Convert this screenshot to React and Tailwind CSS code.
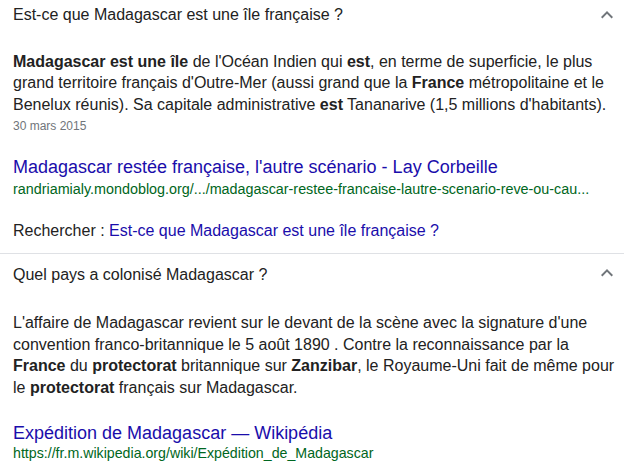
import React from "react";

function Chevron() {
  return (
    <svg width="24" height="24" viewBox="0 0 24 24" className="shrink-0" fill="#70757a">
      <path d="M12 8l-6 6 1.41 1.41L12 10.83l4.59 4.58L18 14z" />
    </svg>
  );
}

export default function App() {
  return (
    <div
      className="w-[624px] h-[476px] overflow-hidden bg-white text-[#222]"
      style={{ fontFamily: '"Liberation Sans", Arial, sans-serif' }}
    >
      {/* Section 1 */}
      <div className="pl-[13px] pr-[5px]">
        <div className="flex items-center justify-between pt-[2.5px]">
          <div className="text-[16px] leading-[22px]">Est-ce que Madagascar est une île française ?</div>
          <Chevron />
        </div>
      </div>
      <div className="pl-[13px] pr-[5px]">
        <div className="mt-[24px] text-[16px] leading-[21.7px] whitespace-nowrap">
          <b>Madagascar est une île</b> de l'Océan Indien qui <b>est</b>, en terme de superficie, le plus
          <br />
          grand territoire français d'Outre-Mer (aussi grand que la <b>France</b> métropolitaine et le
          <br />
          Benelux réunis). Sa capitale administrative <b>est</b> Tananarive (1,5 millions d'habitants).
        </div>
        <div className="mt-[2px] text-[12px] leading-[16px] text-[#70757a]">30 mars 2015</div>
        <div className="mt-[21px] text-[18px] leading-[24px] text-[#1a0dab]">
          Madagascar restée française, l'autre scénario - Lay Corbeille
        </div>
        <div className="text-[14.35px] leading-[20px] text-[#006621] whitespace-nowrap">
          randriamialy.mondoblog.org/.../madagascar-restee-francaise-lautre-scenario-reve-ou-cau...
        </div>
        <div className="mt-[21.3px] text-[16px] leading-[22px]">
          Rechercher : <span className="text-[#1a0dab]">Est-ce que Madagascar est une île française ?</span>
        </div>
      </div>
      <div className="mt-[11.5px] border-t border-[#dfe1e5]" />

      {/* Section 2 */}
      <div className="pl-[13px] pr-[5px]">
        <div className="flex items-center justify-between pt-[9.5px]">
          <div className="text-[16px] leading-[22px]">Quel pays a colonisé Madagascar ?</div>
          <div className="-mt-[3px]">
            <Chevron />
          </div>
        </div>
        <div className="mt-[26px] text-[16px] leading-[21.7px] whitespace-nowrap">
          L'affaire de Madagascar revient sur le devant de la scène avec la signature d'une
          <br />
          convention franco-britannique le 5 août 1890 . Contre la reconnaissance par la
          <br />
          <b>France</b> du <b>protectorat</b> britannique sur <b>Zanzibar</b>, le Royaume-Uni fait de même pour
          <br />
          le <b>protectorat</b> français sur Madagascar.
        </div>
        <div className="mt-[22.4px] text-[18px] leading-[24px] text-[#1a0dab]">
          Expédition de Madagascar — Wikipédia
        </div>
        <div className="-mt-[2px] text-[14.2px] leading-[20px] text-[#006621]">
          https://fr.m.wikipedia.org/wiki/Expédition_de_Madagascar
        </div>
      </div>
    </div>
  );
}
